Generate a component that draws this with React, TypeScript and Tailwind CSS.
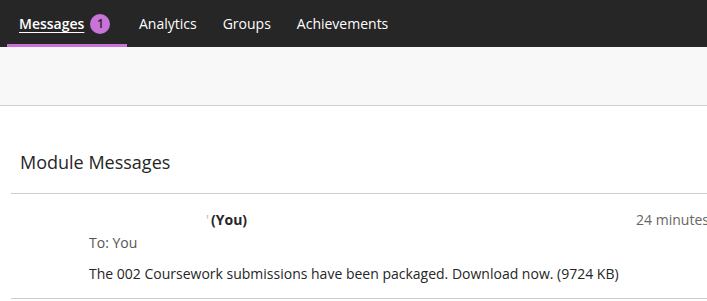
import React from "react"

const tabs = ["Analytics", "Groups", "Achievements"]

const App: React.FC = () => {
  return (
    <div className="h-[301px] w-[707px] overflow-hidden bg-white font-['Open_Sans',sans-serif] text-[#262626]">
      {/* Top nav */}
      <nav className="flex h-[47px] items-stretch bg-[#262626] pl-[7px]">
        <div className="relative flex w-[120px] items-center gap-[6px] pl-[12px] pr-[16px]">
          <span className="text-[14px] font-semibold text-white underline underline-offset-[3px]">Messages</span>
          <span className="flex h-[20px] w-[20px] items-center justify-center rounded-full bg-[#c973d9] text-[12px] font-semibold text-[#262626]">
            1
          </span>
          <span className="absolute bottom-0 left-0 h-[3px] w-[120px] bg-[#c973d9]" />
        </div>
        {tabs.map((t) => (
          <div key={t} className="flex items-center pl-[12px] pr-[14px]">
            <span className="text-[14px] text-white">{t}</span>
          </div>
        ))}
      </nav>

      {/* Gray band */}
      <div className="h-[59px] border-b border-[#d0d0d0] bg-[#f8f8f8]" />

      {/* Module messages */}
      <div className="w-[800px] pl-[11px]">
        <h2 className="flex h-[88px] items-center border-b border-[#cdcdcd] pl-[9px] pt-[25px] text-[18px] text-[#262626]">
          Module Messages
        </h2>
        <div className="border-b border-[#cdcdcd] pb-[14px] pl-[78px] pt-[15px] text-[14px]">
          <div className="flex items-center">
            <span className="w-[120px] text-right text-[#bbb]">'</span>
            <span className="ml-[2px] font-bold">(You)</span>
            <span className="ml-[389px] text-[#666]">24 minutes ago</span>
          </div>
          <div className="mt-[2px] text-[#555]">To: You</div>
          <div className="mt-[10px] text-[#262626]">
            The 002 Coursework submissions have been packaged. Download now. (9724 KB)
          </div>
        </div>
      </div>
    </div>
  )
}

export default App
